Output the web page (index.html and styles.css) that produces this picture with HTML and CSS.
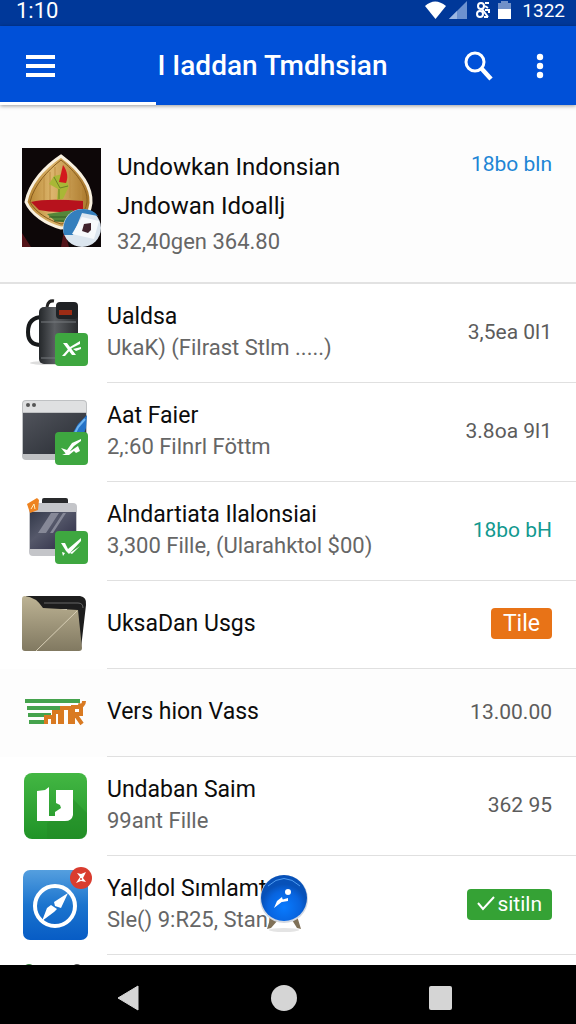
FILE: index.html
```html
<!DOCTYPE html>
<html lang="id">
<head>
  <meta charset="UTF-8">
  <meta name="viewport" content="width=device-width, initial-scale=1.0">
  <title>I Iaddan Tmdhsian</title>
  <link rel="stylesheet" href="styles.css">
</head>
<body>

  <div class="status-bar">
    <span>1:10</span>
    <div class="status-icons">
      <svg width="21" height="18" viewBox="0 0 21 18"><path d="M0 5Q10-4 21 5L10.500 18Z" fill="#fff"/></svg>
      <svg width="18" height="18" viewBox="0 0 18 18"><path d="M0 18L18 0V18Z" fill="#6d92cf"/><path d="M0 18L8 10V18Z" fill="#9db8e2"/></svg>
      <svg class="sync" width="14" height="18" viewBox="0 0 14 18" fill="none" stroke="#fff" stroke-width="2"><circle cx="5" cy="5" r="3"/><circle cx="4" cy="13" r="3"/><path d="M9 2h4M6 8l6 8M9 9h4v3M9 5l3 2M8 16h4"/></svg>
      <svg class="battery" width="13" height="18" viewBox="0 0 13 18"><path d="M0 2h3V0h7v2h3v6H0z" fill="#7090c8"/><path d="M0 8h13v10H0z" fill="#fff"/></svg>
      <span>1322</span>
    </div>
  </div>

  <header class="app-bar">
    <button class="icon-button" type="button" aria-label="Menu">
      <svg width="29" height="24" viewBox="0 0 29 24" fill="#fff"><path d="M0 1h29v4H0zM0 10h29v4H0zM0 19h29v4H0z"/></svg>
    </button>
    <h1>I Iaddan Tmdhsian</h1>
    <button class="icon-button" type="button" aria-label="Cari">
      <svg width="29" height="30" viewBox="0 0 29 30" fill="none" stroke="#fff"><circle cx="11" cy="11" r="9" stroke-width="3"/><path d="M17 17L27 28" stroke-width="4.500"/></svg>
    </button>
    <button class="icon-button more" type="button" aria-label="Lainnya">
      <svg width="8" height="26" viewBox="0 0 8 26" fill="#fff"><circle cx="4" cy="4" r="3.200"/><circle cx="4" cy="13" r="3.200"/><circle cx="4" cy="22" r="3.200"/></svg>
    </button>
    <div class="progress"></div>
  </header>

  <main>
    <section class="featured">
      <svg width="79" height="99" viewBox="0 0 79 99">
        <defs>
          <linearGradient id="wood"><stop offset="0" stop-color="#b5832f"/><stop offset=".4" stop-color="#dcb56c"/><stop offset="1" stop-color="#a87528"/></linearGradient>
          <clipPath id="photo"><path d="M0 0h79v99H0z"/></clipPath>
        </defs>
        <g clip-path="url(#photo)">
          <path d="M0 0h79v99H0z" fill="#0d0708"/>
          <path d="M0 85l9 14H0zM42 82l5 17h-8z" fill="#531419"/>
          <path d="M39 8C55 20 70 37 69 55C67 70 57 79 39 80C24 76 9 66 4 54C8 34 24 18 39 8Z" fill="url(#wood)" stroke="#f8f0df" stroke-width="3"/>
          <path d="M39 12C53 23 66 39 65 54C63 67 54 75 39 76C26 72 13 64 8 54C12 37 26 22 39 12Z" fill="none" stroke="#885c1d"/>
          <path d="M22 29v24M28 24v29M33 19v12M48 23v27M54 29v23M59 38v14" stroke="#bd8e42"/>
          <path d="M32 28L41 26L47 38L41 51L35 52L36 41L27 36Z" fill="#a9b736"/>
          <path d="M32 29l6 11 8-2M37 41v10" fill="none" stroke="#6b8227"/>
          <path d="M41 17C46 24 46 30 44 35L37 34Z" fill="#d3181d"/>
          <path d="M9 54Q24 50 61 53V62Q36 66 17 62Z" fill="#b7121d"/>
          <path d="M25 66L51 62L48 75L33 73Z" fill="#55863a"/>
          <path d="M27 69h22M32 73h15" stroke="#305b25"/>
          <circle cx="60" cy="80" r="19" fill="#dce6ef"/>
          <path d="M42 87C39 73 48 61 61 61Q71 61 76 68L60 65L51 87Z" fill="#347fbd"/>
          <path d="M60 69L77 73L72 91L50 86Z" fill="#f7fafc"/>
          <path d="M62 76l7-1 0 7-3 3-6-2z" fill="#40242d"/>
        </g>
      </svg>
      <div class="featured-text">
        <h2>Undowkan Indonsian</h2>
        <h2>Jndowan Idoallj</h2>
        <p>32,40gen 364.80</p>
      </div>
      <span class="value link">18bo bln</span>
    </section>

    <ul class="app-list">
      <li class="app-row">
        <div class="app-icon">
          <svg width="66" height="70" viewBox="0 0 66 70">
            <defs><linearGradient id="can"><stop offset="0" stop-color="#24272a"/><stop offset=".4" stop-color="#5b5e62"/><stop offset="1" stop-color="#292b2e"/></linearGradient></defs>
            <ellipse cx="28" cy="65" rx="20" ry="2" fill="#ddd"/>
            <path d="M21 19Q6 19 6 34Q6 47 19 47" fill="none" stroke="#17191b" stroke-width="4"/>
            <path d="M25 9Q26 2 32 3" fill="none" stroke="#222" stroke-width="3"/>
            <rect x="17" y="9" width="39" height="57" rx="5" fill="url(#can)"/>
            <path d="M19 24h35M19 60h35" stroke="#777b7e"/>
            <rect x="34" y="4" width="22" height="17" rx="4" fill="#202225"/>
            <path d="M37 12h13v5H37z" fill="#9c2c15"/>
          </svg>
          <svg class="badge" width="34" height="34" viewBox="0 0 34 34"><rect x="1" y="1" width="33" height="33" rx="4" fill="#3ea740"/><path d="M9 11l4 0 9 12-4 0zM8 24l8-9 10-6v3l-8 4-7 8z" fill="#fff"/><path d="M19 17l8-2v2l-5 2" fill="#fff"/></svg>
        </div>
        <div class="app-body">
          <div class="app-text"><h3>Ualdsa</h3><p>UkaK) (Filrast Stlm .....)</p></div>
          <span class="value">3,5ea 0l1</span>
        </div>
      </li>

      <li class="app-row">
        <div class="app-icon">
          <svg width="66" height="70" viewBox="0 0 66 70">
            <defs><linearGradient id="pane" x2="1" y2="1"><stop stop-color="#50535b"/><stop offset="1" stop-color="#292d34"/></linearGradient></defs>
            <rect y="3" width="65" height="60" rx="4" fill="#bfc1c3"/>
            <path d="M1 15V7q0-3 3-3h57q3 0 3 3v8z" fill="#dfe0e1"/>
            <path d="M1 16h63v41H1z" fill="url(#pane)"/>
            <circle cx="6" cy="8" r="2" fill="#555"/><circle cx="12" cy="8" r="2" fill="#555"/>
            <path d="M65 18L56 27L49 39H61L64 31Z" fill="#2472c7"/><path d="M63 22l-7 8-4 8" fill="none" stroke="#6eb4f1" stroke-width="2"/>
          </svg>
          <svg class="badge" width="34" height="34" viewBox="0 0 34 34"><rect x="1" y="1" width="33" height="33" rx="4" fill="#3ea740"/><path d="M7 17l6 2 5-7 9-4v2l-7 5-7 9zM8 24l7-3 9-6 2 5-4 2-2-2-5 4z" fill="#fff"/></svg>
        </div>
        <div class="app-body">
          <div class="app-text"><h3>Aat Faier</h3><p>2,:60 Filnrl Föttm</p></div>
          <span class="value">3.8oa 9l1</span>
        </div>
      </li>

      <li class="app-row">
        <div class="app-icon">
          <svg width="66" height="70" viewBox="0 0 66 70">
            <defs><linearGradient id="screen" x2="1" y2="1"><stop stop-color="#33394a"/><stop offset=".4" stop-color="#55586a"/><stop offset="1" stop-color="#292842"/></linearGradient></defs>
            <rect x="20" y="2" width="26" height="12" rx="2" fill="#292a2c"/>
            <rect x="7" y="7" width="48" height="53" rx="4" fill="#c4c5c9"/>
            <path d="M8 16h46v37H8z" fill="url(#screen)"/>
            <path d="M29 17h8L24 37h-8zM41 17h3L31 37h-3z" fill="#868897"/>
            <path d="M5 8L15 2L17 4L16 14L8 17Z" fill="#ee8320"/><path d="M9 13l3-5 1 5" fill="none" stroke="#fff0c0"/>
          </svg>
          <svg class="badge" width="34" height="34" viewBox="0 0 34 34"><rect x="1" y="1" width="33" height="33" rx="4" fill="#3ea740"/><path d="M7 13l4 0 3 6 13-11v3l-12 13-3-3zM8 22l3 1-2 3zM16 23l10-7-8 8z" fill="#fff"/></svg>
        </div>
        <div class="app-body">
          <div class="app-text"><h3>Alndartiata Ilalonsiai</h3><p>3,300 Fille, (Ularahktol $00)</p></div>
          <span class="value teal">18bo bH</span>
        </div>
      </li>

      <li class="app-row short">
        <div class="app-icon">
          <svg width="66" height="58" viewBox="0 0 66 58">
            <defs><linearGradient id="folder" x2="0" y2="1"><stop stop-color="#bdb394"/><stop offset="1" stop-color="#817961"/></linearGradient></defs>
            <path d="M4 1H58Q65 2 64 10L59 53H45V14H5Z" fill="#1d1d1d"/>
            <path d="M22 8h34q5 0 5 5" fill="none" stroke="#666"/>
            <path d="M0 4Q0 1 3 1Q14 2 21 13L56 15L60 53Q60 56 57 56H3Q0 56 0 53Z" fill="url(#folder)"/>
            <path d="M55 16L14 56" stroke="#d8cfb6"/>
          </svg>
        </div>
        <div class="app-body">
          <div class="app-text"><h3>UksaDan Usgs</h3></div>
          <button class="tag orange" type="button">Tile</button>
        </div>
      </li>

      <li class="app-row short tinted">
        <div class="app-icon">
          <svg width="66" height="28" viewBox="0 0 66 28">
            <path d="M3 3H58M5 10H38M6 17H29M7 24H23" stroke="#45a34d" stroke-width="4"/>
            <path d="M24 26V19H31V26M32 26V14H38V26M40 26V10H48V26M51 26V9H59V16H53L60 26M56 7Q62 9 62 3" fill="none" stroke="#d97a22" stroke-width="4"/>
          </svg>
        </div>
        <div class="app-body">
          <div class="app-text"><h3>Vers hion Vass</h3></div>
          <span class="value">13.00.00</span>
        </div>
      </li>

      <li class="app-row">
        <div class="app-icon">
          <svg width="66" height="70" viewBox="0 0 66 70">
            <defs><linearGradient id="green" x2="0" y2="1"><stop stop-color="#43b743"/><stop offset="1" stop-color="#209327"/></linearGradient></defs>
            <rect x="2" y="2" width="63" height="66" rx="8" fill="url(#green)"/>
            <path d="M28 50L51 28L65 42V60Q65 68 57 68H25V52Z" fill="#228726" opacity=".4"/>
            <path d="M15 20L23 19L27 16V45H33V41L39 37L38 34L34 32V19H51V44Q50 50 43 50H15V24Z" fill="#fff"/>
          </svg>
        </div>
        <div class="app-body">
          <div class="app-text"><h3>Undaban Saim</h3><p>99ant Fille</p></div>
          <span class="value">362 95</span>
        </div>
      </li>

      <li class="app-row">
        <div class="app-icon">
          <svg width="66" height="72" viewBox="0 0 66 72">
            <defs><linearGradient id="blue" x2="0" y2="1"><stop stop-color="#559fdf"/><stop offset=".5" stop-color="#1b74ce"/><stop offset="1" stop-color="#075cc5"/></linearGradient></defs>
            <rect x="1" y="1" width="65" height="70" rx="7" fill="url(#blue)"/>
            <circle cx="33" cy="37" r="20" fill="none" stroke="#fff" stroke-width="4"/>
            <path d="M46 24L39 39L33 37L32 33ZM20 52L25 39L29 36L35 40L32 43Z" fill="#fff"/>
          </svg>
          <svg class="alert" width="22" height="22" viewBox="0 0 22 22"><circle cx="11" cy="11" r="11" fill="#d93c2f"/><path d="M7 6l4 1 5-2-3 6 3 4-5-1-5 2 4-6zM4 9l5-1" fill="#fff"/><circle cx="11" cy="12" r="1" fill="#d93c2f"/></svg>
        </div>
        <div class="app-body">
          <div class="app-text"><h3>Yal|dol Sımlamt</h3><p>Sle() 9:R25, Stanı</p></div>
          <button class="tag green" type="button"><svg width="18" height="18" viewBox="0 0 18 18" fill="none" stroke="#fff" stroke-width="2"><path d="M1 8l5 6L17 2"/></svg>sitiln</button>
          <svg class="bubble" width="50" height="60" viewBox="0 0 50 60">
            <defs><radialGradient id="ball" cx=".5" cy=".7"><stop stop-color="#087bff"/><stop offset=".7" stop-color="#0864df"/><stop offset="1" stop-color="#0751b8"/></radialGradient></defs>
            <ellipse cx="25" cy="56" rx="15" ry="2" fill="#e4e4e4"/>
            <path d="M12 42L8 55L12 54L19 46M33 46L38 54L42 55L38 42" fill="#807158"/>
            <circle cx="25" cy="25" r="24" fill="#d2d8e2"/>
            <circle cx="25" cy="24" r="23" fill="url(#ball)"/>
            <path d="M9 12Q25-3 41 12" fill="none" stroke="#4e9cf1" stroke-width="1"/>
            <circle cx="29" cy="18" r="3" fill="#fff"/><path d="M15 34L18 27L23 23L24 27ZM22 26l7-2v3l-6 1z" fill="#fff"/>
          </svg>
        </div>
      </li>

      <li class="app-row">
        <div class="app-icon">
          <svg width="66" height="80" viewBox="0 0 66 80"><rect x="1" width="12" height="80" rx="6" fill="#35803a"/><rect x="50" width="10" height="80" rx="5" fill="#555"/></svg>
        </div>
        <div class="app-body"></div>
      </li>
    </ul>
  </main>

  <nav class="nav-bar">
    <button type="button" aria-label="Kembali"><svg width="22" height="26" viewBox="0 0 22 26"><path d="M1 13L21 1V25Z" fill="#d5d5d5" stroke="#d5d5d5" stroke-linejoin="round"/></svg></button>
    <button type="button" aria-label="Beranda"><svg width="28" height="28" viewBox="0 0 28 28"><circle cx="14" cy="14" r="13" fill="#d5d5d5"/></svg></button>
    <button type="button" aria-label="Terbaru"><svg width="24" height="24" viewBox="0 0 24 24"><rect x="1" y="0" width="23" height="24" rx="2" fill="#d5d5d5"/></svg></button>
  </nav>

</body>
</html>
```
FILE: styles.css
```css
* {
  box-sizing: border-box;
  margin: 0;
  padding: 0;
}

body {
  display: flex;
  flex-direction: column;
  height: 100vh;
  overflow: hidden;
  font-family: Roboto, "Noto Sans", sans-serif;
  background: #fff;
  color: #0c0c0c;
}

svg {
  display: block;
  flex: none;
}

button {
  border: none;
  background: none;
  font-family: inherit;
  cursor: pointer;
}

.status-bar {
  display: flex;
  justify-content: space-between;
  flex: none;
  height: 26px;
  padding: 0 11px 0 16px;
  background: #003899;
  color: #fff;
  font-size: 22px;
  line-height: 22px;
}

.status-icons {
  display: flex;
  gap: 3px;
  padding-top: 1px;
  font-size: 19px;
  line-height: 20px;
}

.status-icons .sync {
  margin-left: 6px;
}

.status-icons .battery {
  margin: 0 8px 0 5px;
}

.app-bar {
  position: relative;
  z-index: 1;
  display: flex;
  align-items: center;
  flex: none;
  height: 79px;
  padding: 0 32px 0 26px;
  background: #0050d8;
  box-shadow: 0 1px 4px rgba(0, 0, 0, 0.4);
}

.app-bar h1 {
  flex: 1;
  padding-left: 26px;
  text-align: center;
  color: #fff;
  font-size: 28px;
  font-weight: 500;
  white-space: nowrap;
}

.more {
  margin-left: 43px;
}

.progress {
  position: absolute;
  left: 0;
  bottom: 0;
  width: 27%;
  height: 3px;
  background: #fff;
}

main {
  flex: 1;
  min-height: 0;
  overflow: hidden;
}

h2,
h3 {
  font-size: 23px;
  font-weight: 400;
  white-space: nowrap;
}

p,
.value {
  color: #666;
  font-size: 22px;
  white-space: nowrap;
}

.value {
  font-size: 21px;
}

.featured {
  display: flex;
  align-items: flex-start;
  gap: 16px;
  padding: 43px 24px 24px 22px;
  background: #fdfdfd;
  border-bottom: 2px solid #e2e2e2;
}

.featured-text {
  flex: 1;
}

.featured h2 {
  font-size: 24px;
  line-height: 39px;
}

.featured p {
  line-height: 32px;
}

.value.link {
  color: #2085d5;
  line-height: 32px;
}

.app-list {
  list-style: none;
}

.app-row {
  display: flex;
  min-height: 99px;
  padding-left: 22px;
}

.app-row.short {
  min-height: 88px;
}

.app-row.tinted {
  background: #fdfdfd;
}

.app-icon {
  position: relative;
  display: flex;
  align-items: center;
  flex: none;
  width: 66px;
  margin-right: 19px;
  padding-bottom: 2px;
}

.badge {
  position: absolute;
  right: 0;
  bottom: 17px;
}

.alert {
  position: absolute;
  right: -4px;
  top: 11px;
}

.app-body {
  position: relative;
  display: flex;
  align-items: center;
  justify-content: space-between;
  flex: 1;
  padding: 0 24px 2px 0;
  border-bottom: 1px solid #e0e0e0;
}

.app-text h3,
.app-text p {
  line-height: 31px;
}

.app-body .value {
  color: #5c5c5c;
}

.app-body .value.teal {
  color: #12998f;
}

.tag {
  display: flex;
  align-items: center;
  gap: 2px;
  height: 31px;
  padding: 0 10px;
  border-radius: 4px;
  color: #fff;
  font-size: 21px;
}

.tag.orange {
  padding: 0 12px;
  background: #e87317;
  font-size: 23px;
}

.tag.green {
  background: #35a235;
}

.bubble {
  position: absolute;
  left: 152px;
  top: 18px;
}

.nav-bar {
  display: flex;
  justify-content: center;
  flex: none;
  height: 59px;
  padding: 6px 8px 0 0;
  background: #000;
}

.nav-bar button {
  display: flex;
  align-items: center;
  justify-content: center;
  width: 156px;
}
```
